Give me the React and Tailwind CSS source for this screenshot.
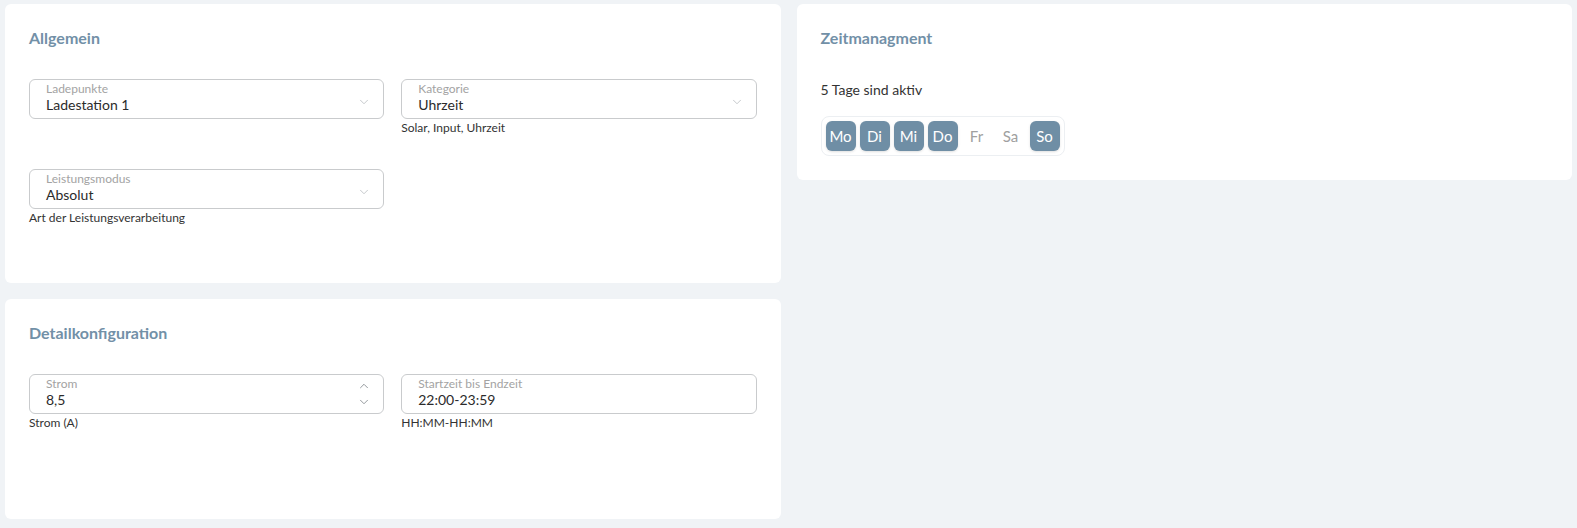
import { ChevronDown, ChevronUp } from 'lucide-react';

const days = [
  { label: 'Mo', active: true },
  { label: 'Di', active: true },
  { label: 'Mi', active: true },
  { label: 'Do', active: true },
  { label: 'Fr', active: false },
  { label: 'Sa', active: false },
  { label: 'So', active: true },
];

const Field = ({ label, value, helper, spinner, select }) => (
  <div>
    <div className="relative h-[40px] rounded-md border border-[#c9cbcd] px-4 pt-[2px]">
      <div className="text-[12px] leading-[14px] text-[#a3a3a3]">{label}</div>
      <div className="text-[14px] leading-[18px] text-[#2b2b2b]">{value}</div>
      {select && (
        <ChevronDown className="absolute right-[12px] top-[15px] h-[14px] w-[14px] text-[#b4b8bc]" strokeWidth={1.3} />
      )}
      {spinner && (
        <div className="absolute right-[12px] top-[4px] flex flex-col items-center gap-[2px] text-[#7d8388]">
          <ChevronUp className="h-[14px] w-[14px]" strokeWidth={1.4} />
          <ChevronDown className="h-[14px] w-[14px]" strokeWidth={1.4} />
        </div>
      )}
    </div>
    <div className="mt-[1px] min-h-[15px] text-[12px] leading-[15px] text-[#333]">{helper}</div>
  </div>
);

const Card = ({ title, className, children }) => (
  <div className={`rounded-md bg-white px-6 pt-6 ${className}`}>
    <h2 className="text-[16px] font-bold leading-[20px] text-[#7290a7]">{title}</h2>
    {children}
  </div>
);

export default function App() {
  return (
    <div
      className="min-h-[528px] bg-[#f0f3f6] px-[5px] pt-[4px]"
      style={{ fontFamily: 'Lato, "Open Sans", sans-serif' }}
    >
      <div className="grid grid-cols-2 items-start gap-4">
        <div className="flex flex-col gap-4">
          <Card title="Allgemein" className="h-[279px]">
            <div className="mt-[31px] grid grid-cols-2 gap-x-[17px] gap-y-[34px]">
              <Field label="Ladepunkte" value="Ladestation 1" select />
              <Field label="Kategorie" value="Uhrzeit" helper="Solar, Input, Uhrzeit" select />
              <Field label="Leistungsmodus" value="Absolut" helper="Art der Leistungsverarbeitung" select />
            </div>
          </Card>
          <Card title="Detailkonfiguration" className="h-[220px]">
            <div className="mt-[31px] grid grid-cols-2 gap-x-[17px]">
              <Field label="Strom" value="8,5" helper="Strom (A)" spinner />
              <Field label="Startzeit bis Endzeit" value="22:00-23:59" helper="HH:MM-HH:MM" />
            </div>
          </Card>
        </div>
        <Card title="Zeitmanagment" className="h-[176px]">
          <p className="mt-[32px] text-[14px] leading-[20px] text-[#333]">5 Tage sind aktiv</p>
          <div className="mt-4 inline-flex gap-1 rounded-lg border border-[#eceff2] p-1">
            {days.map((d) => (
              <button
                key={d.label}
                className={
                  d.active
                    ? 'h-[30px] w-[30px] rounded-[6px] bg-[#6f8ea5] text-[15px] text-white shadow-sm'
                    : 'h-[30px] w-[30px] rounded-[6px] text-[15px] text-[#a0a0a0]'
                }
              >
                {d.label}
              </button>
            ))}
          </div>
        </Card>
      </div>
    </div>
  );
}
